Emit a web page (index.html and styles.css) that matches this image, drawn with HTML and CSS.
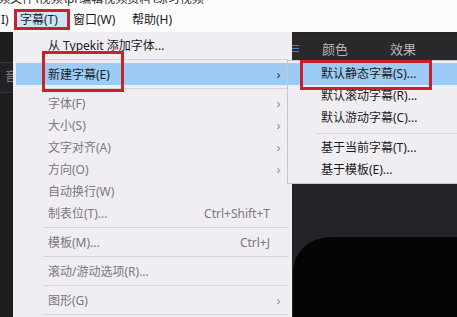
FILE: index.html
```html
<!DOCTYPE html>
<html lang="zh-CN">
<head>
  <meta charset="UTF-8">
  <title>字幕菜单</title>
  <link rel="stylesheet" href="styles.css">
</head>
<body>

<div class="titlebar">
  <span class="title-text">频文件\视频\pr编辑视频资料\练习视频 *</span>
</div>

<div class="menubar">
  <span class="mb-item mb-cut">I)</span>
  <span class="mb-item mb-active">字幕(T)</span>
  <span class="mb-item">窗口(W)</span>
  <span class="mb-item">帮助(H)</span>
</div>

<div class="workspace">
  <div class="strip">
    <div class="strip-row">音</div>
  </div>

  <div class="dropdown">
    <div class="row"><span class="label">从 Typekit 添加字体...</span></div>
    <div class="sep"></div>
    <div class="row hot"><span class="label"><span class="mark">新建字幕(E)</span></span><span class="arrow">›</span></div>
    <div class="sep"></div>
    <div class="row off"><span class="label">字体(F)</span><span class="arrow">›</span></div>
    <div class="row off"><span class="label">大小(S)</span><span class="arrow">›</span></div>
    <div class="row off"><span class="label">文字对齐(A)</span><span class="arrow">›</span></div>
    <div class="row off"><span class="label">方向(O)</span><span class="arrow">›</span></div>
    <div class="row off"><span class="label">自动换行(W)</span></div>
    <div class="row off"><span class="label">制表位(T)...</span><span class="key">Ctrl+Shift+T</span><span class="arrow"></span></div>
    <div class="sep"></div>
    <div class="row off"><span class="label">模板(M)...</span><span class="key">Ctrl+J</span><span class="arrow"></span></div>
    <div class="sep"></div>
    <div class="row off"><span class="label">滚动/游动选项(R)...</span></div>
    <div class="sep"></div>
    <div class="row off"><span class="label">图形(G)</span><span class="arrow">›</span></div>
    <div class="sep"></div>
  </div>

  <div class="panel">
    <div class="panel-head">
      <svg class="hamburger" width="7" height="9" viewBox="0 0 7 9">
        <path d="M0 1.5H7M0 4.5H7M0 7.5H7" stroke="#3f82d4" stroke-width="1.2"/>
      </svg>
      <span class="tab">颜色</span>
      <span class="tab">效果</span>
    </div>
    <div class="panel-body">
      <div class="preview"></div>
    </div>
  </div>

  <div class="submenu">
    <div class="srow hot"><span class="smark"></span>默认静态字幕(S)...</div>
    <div class="srow">默认滚动字幕(R)...</div>
    <div class="srow">默认游动字幕(C)...</div>
    <div class="ssep"></div>
    <div class="srow">基于当前字幕(T)...</div>
    <div class="srow">基于模板(E)...</div>
  </div>
</div>

</body>
</html>
```

FILE: styles.css
```css
* {
  box-sizing: border-box;
}
body {
  margin: 0;
  width: 457px;
  height: 317px;
  overflow: hidden;
  background: #fcfcfc;
  font-family: 'Noto Sans', 'Noto Sans CJK SC', sans-serif;
  font-size: 12px;
  color: #1b1b1b;
}
.titlebar {
  height: 9px;
  overflow: hidden;
  white-space: nowrap;
}
.title-text {
  display: block;
  margin-top: -9px;
  margin-left: -2px;
  line-height: 16px;
  color: #2a2a2a;
}
.menubar {
  height: 23px;
  display: flex;
  align-items: flex-start;
  white-space: nowrap;
}
.mb-item {
  height: 21px;
  line-height: 21px;
}
.mb-cut {
  width: 14px;
  padding-left: 1px;
}
.mb-active {
  width: 56px;
  padding-left: 3px;
  background: #cde5f8;
  border: 3px solid #c8232b;
  line-height: 15px;
}
.mb-item:nth-child(3) {
  margin-left: 3px;
  width: 59px;
}
.workspace {
  position: relative;
  display: flex;
  height: 285px;
}
.strip {
  width: 13px;
  background: #1f1c20;
  overflow: hidden;
}
.strip-row {
  margin-top: 30px;
  height: 31px;
  border-top: 1px solid #38353a;
  border-bottom: 1px solid #38353a;
  background: #242126;
  color: #8c8a8e;
  line-height: 28px;
  padding-left: 5px;
  white-space: nowrap;
}
.dropdown {
  width: 279px;
  flex-shrink: 0;
  background: #f0eef2;
  padding-top: 2px;
}
.row {
  display: flex;
  align-items: center;
  height: 22px;
  margin: 0 5px 0 3px;
  padding-left: 32px;
  white-space: nowrap;
}
.row.hot {
  background: #9ccbf5;
}
.row.off {
  color: #7a787c;
}
.label {
  flex: 1;
}
.key {
  color: #7a787c;
}
.arrow {
  width: 17px;
  text-align: center;
  color: #8e8c90;
  font-size: 13px;
}
.row.hot .arrow {
  color: #333;
}
.mark {
  position: relative;
}
.mark::after {
  content: '';
  position: absolute;
  left: -6px;
  right: -14px;
  top: -15px;
  bottom: -9px;
  border: 3px solid #c8232b;
}
.sep {
  height: 7px;
  margin: 0 4px 0 30px;
  background: linear-gradient(#d6d4d8, #d6d4d8) 0 3px / 100% 1px no-repeat;
}
.panel {
  flex: 1;
  min-width: 0;
  display: flex;
  flex-direction: column;
  background: #262328;
}
.panel-head {
  height: 30px;
  margin-top: 1px;
  display: flex;
  align-items: center;
  background: #2b282c;
  color: #b7b5b9;
  font-size: 13px;
  white-space: nowrap;
}
.hamburger {
  flex-shrink: 0;
  margin-right: 23px;
}
.tab {
  flex-shrink: 0;
  margin-right: 42px;
}
.panel-body {
  flex: 1;
  display: flex;
  flex-direction: column;
  justify-content: flex-end;
  padding-left: 1px;
}
.preview {
  height: 80px;
  background: #050505;
  border-top-left-radius: 38px 34px;
}
.submenu {
  position: absolute;
  left: 287px;
  top: 28px;
  width: 180px;
  height: 124px;
  padding-top: 2px;
  background: #f0eef2;
  border: 1px solid #c9c7cb;
}
.srow {
  position: relative;
  height: 22px;
  line-height: 22px;
  padding-left: 33px;
  white-space: nowrap;
}
.srow.hot {
  background: #9ccbf5;
}
.smark {
  position: absolute;
  left: 12px;
  width: 132px;
  top: -3px;
  bottom: -5px;
  border: 3px solid #c8232b;
}
.ssep {
  height: 8px;
  margin-left: 28px;
  background: linear-gradient(#d6d4d8, #d6d4d8) 0 4px / 100% 1px no-repeat;
}
```
